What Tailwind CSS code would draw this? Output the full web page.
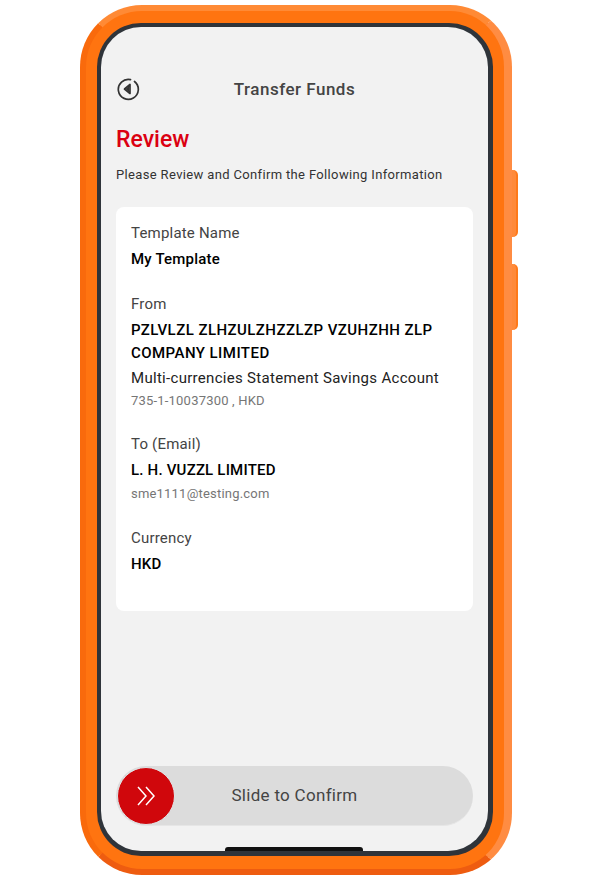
<!DOCTYPE html>
<html lang="en">
<head>
<meta charset="UTF-8">
<meta name="viewport" content="width=device-width, initial-scale=1.0">
<title>Transfer Funds</title>
<script src="https://cdn.jsdelivr.net/npm/@tailwindcss/browser@4"></script>
</head>
<body class="bg-white w-[590px] h-[880px] overflow-hidden font-['Roboto',sans-serif]">
<div class="relative ml-[80px] mt-[5px] w-[432px] h-[870px]">
  <!-- side buttons -->
  <div class="absolute left-[428px] top-[165px] w-[10px] h-[67px] rounded-r-[5px] bg-[#ff8a3a] border-r-2 border-[#ff7a1a]"></div>
  <div class="absolute left-[428px] top-[259px] w-[10px] h-[66px] rounded-r-[5px] bg-[#ff8a3a] border-r-2 border-[#ff7a1a]"></div>
  <!-- case -->
  <div class="relative h-full rounded-[62px] bg-[#ff7410] border-t-[6px] border-t-[#ff8a35] border-r-[8px] border-r-[#ff8c42] border-b-[6px] border-b-[#ee5c10] border-l-[6px] border-l-[#f96a0c] p-[11px] pt-[12px] pb-[13px]">
    <div class="h-full rounded-[44px] bg-[#2f343a] p-[4px] pr-[5px] pb-[5px]">
      <div class="relative flex flex-col h-full rounded-[40px] bg-[#f2f2f2] px-[15px] overflow-hidden">
        <div class="relative flex items-center justify-center h-[24px] mt-[50px]">
          <svg class="absolute left-0 top-0 w-[24px] h-[24px]" viewBox="0 0 24 24" fill="none">
            <path d="M14.5 2.6 A10 10 0 1 0 18.5 4.5" stroke="#333" stroke-width="1.7" stroke-linecap="round"/>
            <path d="M14 7.5 V16.5 L8.5 12 Z" fill="none" stroke="#333" stroke-width="1.7" stroke-linejoin="round"/>
            <path d="M13.5 8.5 V15.5 L9.5 12 Z" fill="#333"/>
          </svg>
          <h1 class="text-[17px] leading-[24px] font-medium tracking-[0.5px] text-[#444]">Transfer Funds</h1>
        </div>
        <h2 class="mt-[24px] text-[23px] leading-[30px] font-medium text-[#db0011]">Review</h2>
        <p class="mt-[11px] text-[13px] leading-[18px] tracking-[0.35px] text-[#333]">Please Review and Confirm the Following Information</p>
        <div class="mt-[23px] h-[404px] rounded-[8px] bg-white px-[15px] pt-[15px] text-[15px] tracking-[0.2px]">
          <p class="leading-[22px] text-[#444]">Template Name</p>
          <p class="mt-[4px] leading-[22px] font-medium text-black">My Template</p>
          <p class="mt-[23px] leading-[22px] text-[#444]">From</p>
          <p class="mt-[4px] leading-[23px] font-medium text-black tracking-[0.45px]">PZLVLZL ZLHZULZHZZLZP VZUHZHH ZLP COMPANY LIMITED</p>
          <p class="mt-[2px] leading-[23px] text-[#222] tracking-[0.3px]">Multi-currencies Statement Savings Account</p>
          <p class="mt-[1px] text-[13px] leading-[20px] text-[#767676]">735-1-10037300 , HKD</p>
          <p class="mt-[22px] leading-[22px] text-[#444]">To (Email)</p>
          <p class="mt-[4px] leading-[22px] font-medium text-black">L. H. VUZZL LIMITED</p>
          <p class="mt-[3px] text-[13px] leading-[20px] text-[#767676]">sme1111@testing.com</p>
          <p class="mt-[23px] leading-[22px] text-[#444]">Currency</p>
          <p class="mt-[4px] leading-[22px] font-medium text-black">HKD</p>
        </div>
        <div class="relative mt-[155px] flex items-center justify-center h-[60px] rounded-full bg-[#dcdcdc] border-b border-[#e6e6e6]">
          <div class="absolute left-[1px] top-[1px] flex items-center justify-center w-[58px] h-[58px] rounded-full bg-[#d0070c] border border-[#dfe6e8]">
            <svg class="w-[22px] h-[22px]" viewBox="0 0 22 22" fill="none" stroke="#fff" stroke-width="1.5">
              <path d="M3 2 L11 11 L3 20"/>
              <path d="M11 2 L19 11 L11 20"/>
            </svg>
          </div>
          <span class="text-[17px] tracking-[0.3px] text-[#444]">Slide to Confirm</span>
        </div>
        <div class="absolute left-[124px] bottom-0 w-[138px] h-[4px] rounded-t-[3px] bg-[#111]"></div>
      </div>
    </div>
  </div>
</div>
</body>
</html>
